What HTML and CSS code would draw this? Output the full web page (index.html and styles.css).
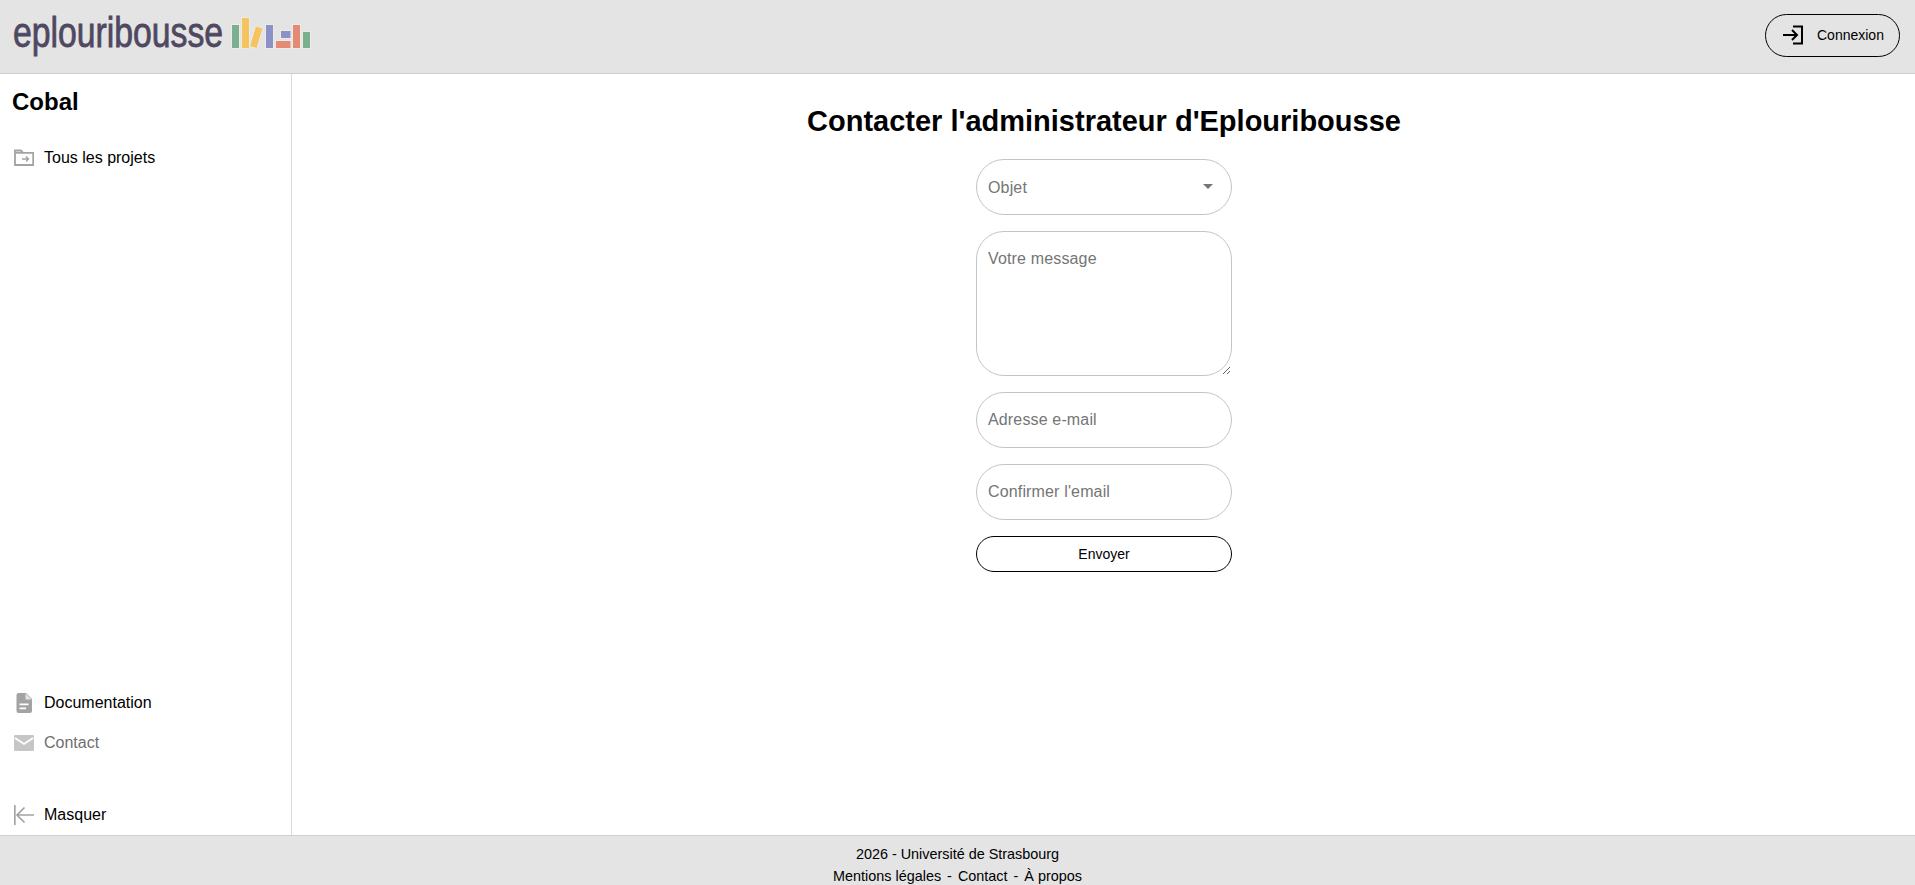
FILE: index.html
```html
<!DOCTYPE html>
<html lang="fr">
<head>
<meta charset="utf-8">
<title>Eplouribousse</title>
<link rel="stylesheet" href="styles.css">
</head>
<body>
<header class="topbar">
  <a class="logo" href="#">
    <span class="logo-text"><span class="logo-word">eplouribousse</span></span>
    <svg class="logo-bars" width="82" height="34" viewBox="0 0 82 34">
      <g stroke="#ecebe6" stroke-width="1">
        <rect x="1.5" y="8.500" width="8" height="24" fill="#7ab08f"/>
        <rect x="11.5" y="1.500" width="8" height="31" fill="#f5c45e"/>
        <polygon points="25.5,10 33,12 27,32.5 19.5,30.5" fill="#f5c45e"/>
        <rect x="35.5" y="8.500" width="8" height="24" fill="#8c92c8"/>
        <rect x="45.5" y="24.500" width="15.5" height="8" fill="#e58a75"/>
        <rect x="50.5" y="14.500" width="10.5" height="8" fill="#8c92c8"/>
        <rect x="62.5" y="8.500" width="8" height="24" fill="#e58a75"/>
        <rect x="72.5" y="15.500" width="8" height="17" fill="#7ab08f"/>
      </g>
    </svg>
  </a>
  <a class="login" href="#">
    <svg class="login-icon" width="22" height="20" viewBox="0 0 22 20" fill="none" stroke="#000" stroke-width="2">
      <path d="M11 1.500h9v17h-9"/>
      <path d="M1 10h14M10 5l5 5-5 5"/>
    </svg>
    <span>Connexion</span>
  </a>
</header>
<div class="middle">
  <aside class="sidebar">
    <h2 class="site-name">Cobal</h2>
    <a class="side-item" href="#">
      <svg class="side-icon" width="20" height="20" viewBox="0 0 20 20" fill="none" stroke="#a3a3a3" stroke-width="1.800">
        <path d="M1 17V2.500h6l2 2.300h10.200V17z"/>
        <path d="M1 4.800h8"/>
        <path d="M8 11h6.500M12 8.500l2.500 2.500-2.500 2.500" stroke-width="1.400"/>
      </svg>
      <span>Tous les projets</span>
    </a>
    <div class="spacer"></div>
    <a class="side-item" href="#">
      <svg class="side-icon" width="20" height="20" viewBox="0 0 20 20">
        <path d="M4.500 0h7.500l6 6v12a2 2 0 0 1-2 2H4.500a2 2 0 0 1-2-2V2a2 2 0 0 1 2-2z" fill="#a3a3a3"/>
        <path d="M11.500 0.500v6h6z" fill="#e4e4e4"/>
        <path d="M5.500 10.500h9v1.800h-9zM5.500 14.500h6.500v1.800h-6.500z" fill="#fff"/>
      </svg>
      <span>Documentation</span>
    </a>
    <a class="side-item side-item-active" href="#">
      <svg class="side-icon" width="20" height="20" viewBox="0 0 20 20">
        <path d="M1 2h18a1 1 0 0 1 1 1v14a1 1 0 0 1-1 1H1a1 1 0 0 1-1-1V3a1 1 0 0 1 1-1z" fill="#c6c6c6"/>
        <path d="M1 5l9 6 9-6" fill="none" stroke="#fff" stroke-width="1.800"/>
      </svg>
      <span>Contact</span>
    </a>
    <a class="side-item side-item-last" href="#">
      <svg class="side-icon" width="20" height="20" viewBox="0 0 20 20" fill="none" stroke="#a3a3a3" stroke-width="1.700">
        <path d="M0.800 0v20"/>
        <path d="M20 10H3M10.500 2.500L3 10l7.500 7.500"/>
      </svg>
      <span>Masquer</span>
    </a>
  </aside>
  <main class="content">
    <h1 class="title">Contacter l'administrateur d'Eplouribousse</h1>
    <form class="contact-form">
      <div class="select-wrap">
        <select class="field field-select">
          <option>Objet</option>
        </select>
      </div>
      <textarea class="field field-area" placeholder="Votre message"></textarea>
      <input class="field" type="email" placeholder="Adresse e-mail">
      <input class="field" type="email" placeholder="Confirmer l'email">
      <button class="send" type="button">Envoyer</button>
    </form>
  </main>
</div>
<footer class="footer">
  <div>2026 - Université de Strasbourg</div>
  <div class="footer-links">
    <a href="#">Mentions légales</a><span>-</span><a href="#">Contact</a><span>-</span><a href="#">À propos</a>
  </div>
</footer>
</body>
</html>
```
FILE: styles.css
```css
* {
  box-sizing: border-box;
}

html,
body {
  height: 885px;
}

body {
  margin: 0;
  display: flex;
  flex-direction: column;
  overflow: hidden;
  background: #fff;
  color: #000;
  font-family: "Liberation Sans", Arial, sans-serif;
  font-size: 16px;
}

a {
  color: inherit;
  text-decoration: none;
}

.topbar {
  flex: 0 0 74px;
  display: flex;
  align-items: center;
  justify-content: space-between;
  padding: 0 15px 2px 13px;
  background: #e4e4e4;
  border-bottom: 1px solid #cfcfcf;
}

.logo {
  display: flex;
  align-items: center;
  gap: 7px;
}

.logo-text {
  display: block;
  width: 210px;
  height: 48px;
  margin-bottom: 5px;
}

.logo-word {
  display: block;
  width: 265px;
  color: #4e4860;
  font-size: 42.5px;
  line-height: 48px;
  -webkit-text-stroke: 0.8px #4e4860;
  transform: scaleX(0.794);
  transform-origin: left center;
  white-space: nowrap;
}

.logo-bars {
  display: block;
  margin-bottom: 6px;
}

.login {
  display: flex;
  align-items: center;
  gap: 13px;
  width: 135px;
  height: 43px;
  padding: 0 0 1px 16px;
  border: 1px solid #000;
  border-radius: 22px;
  font-size: 14px;
}

.login-icon {
  display: block;
}

.middle {
  flex: 1 1 auto;
  display: flex;
  min-height: 0;
}

.sidebar {
  flex: 0 0 292px;
  display: flex;
  flex-direction: column;
  padding-top: 14px;
  border-right: 1px solid #d9d9d9;
}

.site-name {
  margin: 0 0 22px 12px;
  font-size: 24px;
  line-height: 28px;
  font-weight: 700;
}

.side-item {
  display: flex;
  align-items: center;
  gap: 10px;
  height: 40px;
  padding-left: 14px;
}

.side-item-active {
  color: #6f6f6f;
}

.side-item-last {
  margin-top: 32px;
}

.side-icon {
  display: block;
  flex: none;
}

.spacer {
  flex: 1 1 auto;
}

.content {
  flex: 1 1 auto;
  display: flex;
  flex-direction: column;
  align-items: center;
  padding: 29px 0 0 1px;
}

.title {
  margin: 0 0 19px;
  font-size: 29px;
  line-height: 37px;
  font-weight: 700;
}

.contact-form {
  display: flex;
  flex-direction: column;
  gap: 16px;
  width: 256px;
}

.field {
  display: block;
  width: 100%;
  height: 56px;
  padding: 0 11px;
  border: 1px solid #c4c4c4;
  border-radius: 28px;
  background: #fff;
  color: #757575;
  font-family: inherit;
  font-size: 16px;
  letter-spacing: 0.15px;
  outline: none;
}

.field::placeholder {
  color: #757575;
  opacity: 1;
}

.select-wrap {
  position: relative;
}

.select-wrap::after {
  content: "";
  position: absolute;
  top: 25px;
  right: 19px;
  border-left: 5px solid transparent;
  border-right: 5px solid transparent;
  border-top: 5px solid #757575;
  pointer-events: none;
}

.field-select {
  appearance: none;
}

.field-area {
  height: 145px;
  padding-top: 16px;
  line-height: 21px;
  resize: vertical;
}

.send {
  height: 36px;
  border: 1px solid #000;
  border-radius: 18px;
  background: #fff;
  color: #000;
  font-family: inherit;
  font-size: 14px;
}

.footer {
  flex: 0 0 50px;
  padding-top: 7px;
  overflow: hidden;
  background: #e4e4e4;
  border-top: 1px solid #cfcfcf;
  font-size: 14.4px;
  line-height: 22px;
  text-align: center;
}

.footer-links {
  display: flex;
  justify-content: center;
  gap: 6px;
}
```
